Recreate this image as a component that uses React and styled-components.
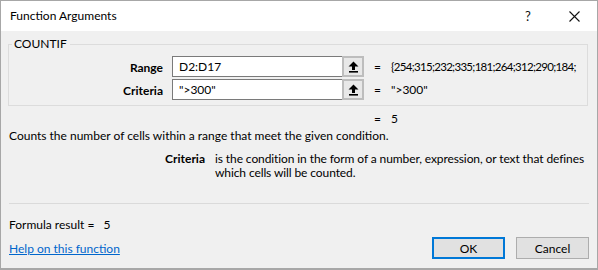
import React from 'react';
import styled, { createGlobalStyle } from 'styled-components';

const GlobalStyle = createGlobalStyle`
  html, body {
    margin: 0;
    padding: 0;
    background: #ffffff;
  }
  body {
    font-family: "Segoe UI", Lato, "Noto Sans", sans-serif;
    font-size: 12px;
    color: #000000;
  }
  * {
    box-sizing: border-box;
  }
`;

const Window = styled.div`
  width: 598px;
  height: 270px;
  display: flex;
  flex-direction: column;
  background: #f0f0f0;
  border: 1px solid #a7a7a7;
  border-bottom-width: 2px;
  overflow: hidden;
`;

const TitleBar = styled.div`
  height: 30px;
  flex: none;
  display: flex;
  align-items: center;
  background: #ffffff;
  padding-left: 9px;
`;

const Title = styled.div`
  flex: 1;
  font-size: 12px;
  padding-bottom: 1px;
`;

const TitleButton = styled.div`
  width: ${(p) => p.$w}px;
  height: 30px;
  display: flex;
  align-items: center;
  justify-content: center;
  font-size: 13px;
  color: #111;
`;

const Body = styled.div`
  flex: 1;
  display: flex;
  flex-direction: column;
  padding: 0 8px 0 7px;
`;

const Group = styled.fieldset`
  margin: 6px 1px 0 0;
  padding: 5px 0 4px 0;
  border: 1px solid #dcdcdc;
  height: 69px;
  min-width: 0;
`;

const Legend = styled.legend`
  padding: 0 3px 0 2px;
  margin-left: 3px;
  font-size: 12px;
  line-height: 14px;
`;

const ArgGrid = styled.div`
  display: grid;
  grid-template-columns: 154px 179px 22px 1fr;
  grid-auto-rows: 21px;
  row-gap: 2px;
  align-items: center;
`;

const ArgLabel = styled.div`
  font-weight: bold;
  text-align: right;
  padding-top: 2px;
`;

const ArgInput = styled.div`
  height: 21px;
  margin-left: 9px;
  border: 1px solid #7a7a7a;
  border-right: none;
  background: #ffffff;
  padding: 0 0 0 6px;
  display: flex;
  align-items: center;
  font-size: 12px;
`;

const CollapseButton = styled.div`
  height: 21px;
  border: 2px solid #bdbdbd;
  background: #e8e8e8;
  display: flex;
  align-items: center;
  justify-content: center;
`;

const ArgValue = styled.div`
  display: flex;
  align-items: center;
  white-space: nowrap;
  overflow: hidden;
  padding-left: 10px;
`;

const ValueText = styled.span`
  font-size: ${(p) => (p.$tight ? '11.5px' : '12px')};
  letter-spacing: ${(p) => (p.$tight ? '-0.7px' : '0')};
`;

const Equals = styled.span`
  width: 17px;
  flex: none;
`;

const ResultRow = styled.div`
  display: flex;
  padding-left: 366px;
  margin-top: 6px;
  line-height: 13px;
`;

const Description = styled.div`
  margin-top: 4px;
  padding-left: 1px;
  line-height: 14px;
`;

const ArgHelp = styled.div`
  display: grid;
  grid-template-columns: 207px 1fr;
  margin-top: 9px;
  line-height: 14px;
`;

const ArgHelpName = styled.div`
  font-weight: bold;
  text-align: right;
  padding-right: 10px;
`;

const ArgHelpText = styled.div`
  white-space: nowrap;
  letter-spacing: -0.1px;
`;

const Separator = styled.div`
  height: 1px;
  background: #dadada;
  margin-top: 23px;
  margin-left: 1px;
`;

const FormulaResult = styled.div`
  margin-top: 14px;
  padding-left: 1px;
  line-height: 14px;
`;

const Footer = styled.div`
  display: flex;
  align-items: center;
  margin-top: 5px;
  padding-left: 1px;
`;

const HelpLink = styled.a`
  flex: 1;
  color: #0066cc;
  text-decoration: underline;
  cursor: pointer;
`;

const Button = styled.button`
  width: 73px;
  height: 22px;
  margin-left: ${(p) => (p.$first ? 0 : 11)}px;
  font-family: inherit;
  font-size: 12px;
  color: #000;
  background: #e1e1e1;
  border: ${(p) => (p.$default ? '2px solid #0078d7' : '1px solid #adadad')};
  padding: 0;
`;

const UpArrow = () => (
  <svg width="11" height="12" viewBox="0 0 11 12">
    <path d="M5.5 0.5 L10.5 5.5 L7 5.5 L7 9 L4 9 L4 5.5 L0.5 5.5 Z" fill="#000" />
    <rect x="1" y="10" width="9" height="1.6" fill="#000" />
  </svg>
);

const CloseIcon = () => (
  <svg width="11" height="11" viewBox="0 0 11 11">
    <path d="M0.5 0.5 L10.5 10.5 M10.5 0.5 L0.5 10.5" stroke="#111" strokeWidth="1.1" />
  </svg>
);

const args = [
  { name: 'Range', value: 'D2:D17', result: '{254;315;232;335;181;264;312;290;184;', tight: true },
  { name: 'Criteria', value: '">300"', result: '">300"' },
];

export default function App() {
  return (
    <>
      <GlobalStyle />
      <Window>
        <TitleBar>
          <Title>Function Arguments</Title>
          <TitleButton $w={46}>?</TitleButton>
          <TitleButton $w={46}>
            <CloseIcon />
          </TitleButton>
        </TitleBar>
        <Body>
          <Group>
            <Legend>COUNTIF</Legend>
            <ArgGrid>
              {args.map((a) => (
                <React.Fragment key={a.name}>
                  <ArgLabel>{a.name}</ArgLabel>
                  <ArgInput>{a.value}</ArgInput>
                  <CollapseButton>
                    <UpArrow />
                  </CollapseButton>
                  <ArgValue>
                    <Equals>=</Equals>
                    <ValueText $tight={a.tight}>{a.result}</ValueText>
                  </ArgValue>
                </React.Fragment>
              ))}
            </ArgGrid>
          </Group>
          <ResultRow>
            <Equals>=</Equals>5
          </ResultRow>
          <Description>
            Counts the number of cells within a range that meet the given condition.
          </Description>
          <ArgHelp>
            <ArgHelpName>Criteria</ArgHelpName>
            <ArgHelpText>
              is the condition in the form of a number, expression, or text that defines
              <br />
              which cells will be counted.
            </ArgHelpText>
          </ArgHelp>
          <Separator />
          <FormulaResult>Formula result = &nbsp;&nbsp;5</FormulaResult>
          <Footer>
            <HelpLink>Help on this function</HelpLink>
            <Button $default $first>OK</Button>
            <Button>Cancel</Button>
          </Footer>
        </Body>
      </Window>
    </>
  );
}
